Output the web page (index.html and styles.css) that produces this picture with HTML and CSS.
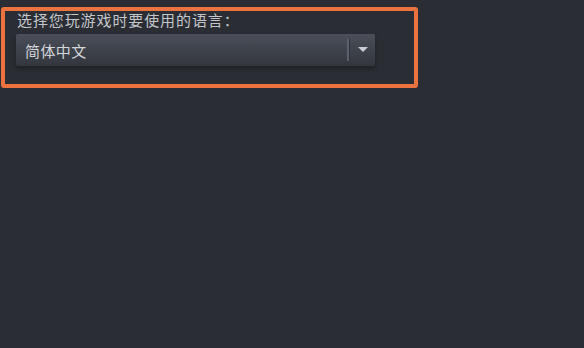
FILE: index.html
```html
<!DOCTYPE html>
<html lang="zh-CN">
<head>
<meta charset="utf-8">
<link rel="stylesheet" href="styles.css">
</head>
<body>
<div class="panel">
  <div class="label">选择您玩游戏时要使用的语言：</div>
  <div class="select">
    <span class="value">简体中文</span>
    <span class="sep"></span>
    <span class="arrow"><svg width="10" height="6" viewBox="0 0 10 6"><path d="M0 0 L10 0 L5 5 Z" fill="#c9cdd3"/></svg></span>
  </div>
</div>
</body>
</html>
```
FILE: styles.css
```css
html, body {
  margin: 0;
  padding: 0;
  background: #2a2d33;
  width: 584px;
  height: 348px;
  overflow: hidden;
  font-family: "Noto Sans CJK SC", "Liberation Sans", sans-serif;
}
.panel {
  margin: 7px 0 0 1px;
  width: 398px;
  height: 73px;
  border: 4px solid #ec7340;
  border-radius: 3px;
  padding: 0 0 0 11px;
  box-sizing: content-box;
  display: flex;
  flex-direction: column;
}
.label {
  color: #c3c6cb;
  font-size: 15px;
  line-height: 18px;
  padding-left: 1px;
  letter-spacing: 0.9px;
}
.select {
  margin-top: 5px;
  width: 359px;
  height: 32px;
  border-radius: 2px;
  background: linear-gradient(to bottom, #4a4f59 0%, #3d4149 55%, #33363d 100%);
  box-shadow: 0 3px 4px rgba(0,0,0,0.25);
  display: flex;
  align-items: center;
}
.value {
  flex: 1;
  color: #d2d5da;
  font-size: 15px;
  padding-left: 9px;
  letter-spacing: 0.4px;
}
.sep {
  width: 2px;
  height: 22px;
  background: #5b606a;
  border-right: 1px solid #2f3238;
}
.arrow {
  width: 25px;
  display: flex;
  justify-content: center;
  align-items: center;
}
```
